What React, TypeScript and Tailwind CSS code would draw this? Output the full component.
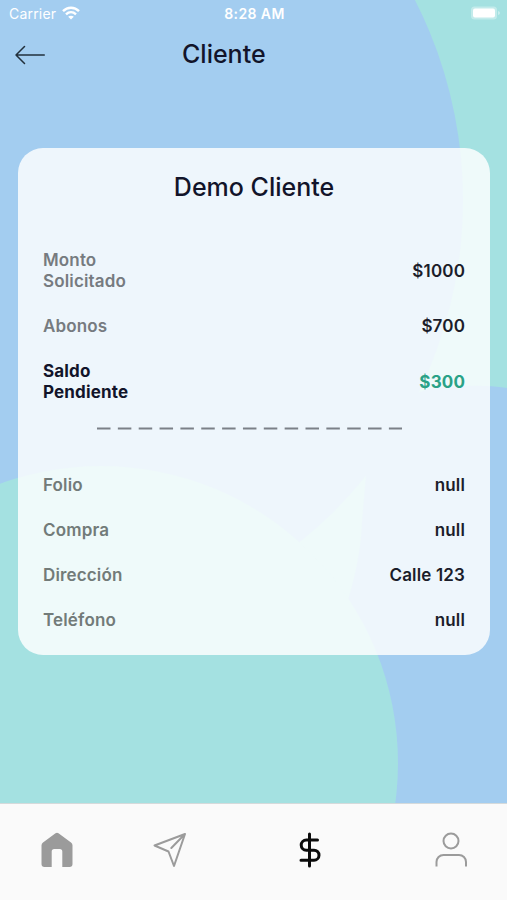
import React from 'react';

const amounts = [
  { label: 'Monto Solicitado', value: '$1000', labelClass: 'text-[#767b80]', valueClass: 'text-[#1b1d2a]' },
  { label: 'Abonos', value: '$700', labelClass: 'text-[#767b80]', valueClass: 'text-[#1b1d2a]' },
  { label: 'Saldo Pendiente', value: '$300', labelClass: 'text-[#12142a] font-bold', valueClass: 'text-[#2aa287] font-bold' },
];

const details = [
  { label: 'Folio', value: 'null' },
  { label: 'Compra', value: 'null' },
  { label: 'Dirección', value: 'Calle 123' },
  { label: 'Teléfono', value: 'null' },
];

const Background = () => (
  <svg className="absolute inset-0" width="507" height="804" viewBox="0 0 507 804">
    <rect width="507" height="804" fill="#a4e1e1" />
    <path d="M345 804V610Q361 560 362 522L366 476Q380 400 430 389Q475 383 507 388V804Z" fill="#a3cdf0" />
    <circle cx="23" cy="200" r="440" fill="#a3cdf0" />
    <circle cx="101" cy="763" r="297" fill="#a4e1e1" />
  </svg>
);

const StatusBar = () => (
  <div className="grid h-[26px] grid-cols-3 items-center pl-[9px] pr-[7px] text-[14px] text-white">
    <div className="flex items-center gap-[6px]">
      <span className="tracking-[0.2px]">Carrier</span>
      <svg width="18" height="14" viewBox="0 0 18 14" fill="none" stroke="white" strokeWidth="2.4">
        <path d="M1 5.2C5.5 .6 12.500 .6 17 5.200" />
        <path d="M4 8.300C7 5.500 11 5.500 14 8.300" />
        <path d="M9 13.500 6.200 10.700C7.700 9.300 10.300 9.300 11.800 10.700Z" fill="white" stroke="none" />
      </svg>
    </div>
    <span className="pt-px text-center text-[14px] font-semibold tracking-[0.4px]">8:28 AM</span>
    <svg className="justify-self-end" width="30" height="14" viewBox="0 0 30 14">
      <rect x="1" y=".5" width="26" height="13" rx="3.500" fill="white" fillOpacity=".35" />
      <rect x="3" y="2.500" width="22" height="9" rx="2" fill="white" />
      <path d="M28 5v4q2-.5 2-2t-2-2Z" fill="white" fillOpacity=".4" />
    </svg>
  </div>
);

const Header = () => (
  <div className="flex h-[57px] items-center px-[15px]">
    <svg width="30" height="20" viewBox="0 0 30 20" fill="none" stroke="#22303c" strokeWidth="1.500" strokeLinecap="round" strokeLinejoin="round">
      <path d="M29.300 10H1M9.500 1.500 1 10l8.500 8.500" />
    </svg>
    <h1 className="ml-[137px] text-[25px] font-[550] text-[#12142a]">Cliente</h1>
  </div>
);

const TabBar = () => (
  <nav className="relative flex h-[97px] shrink-0 border-t border-[#d5dadb] bg-[#fafafa]">
    <div className="w-[114px] pt-[28px]">
      <svg className="mx-auto" width="32" height="36" viewBox="0 0 32 36" fill="#9b9b9b">
        <path d="M14.500 1.200Q16 .2 17.500 1.200L30 10.500Q31.500 11.600 31.500 13.500V32Q31.500 35 28.500 35H21.300V19.500Q21.300 17 18.800 17H13.200Q10.700 17 10.700 19.500V35H3.500Q.5 35 .5 32V13.500Q.5 11.600 2 10.500Z" />
      </svg>
    </div>
    <div className="w-[111px] pt-[28px]">
      <svg className="mx-auto" width="34" height="36" viewBox="0 0 34 36" fill="none" stroke="#9b9b9b" strokeWidth="2" strokeLinejoin="round" strokeLinecap="round">
        <path d="M32 2 1.500 13.500 15.500 19.500 21 34 32 2 18.300 16" />
      </svg>
    </div>
    <div className="w-[169px] pt-[28px]">
      <svg className="mx-auto" width="22" height="36" viewBox="0 0 22 36" fill="none" stroke="#0b0b0b" strokeWidth="3" strokeLinecap="round">
        <path d="M10.500 2V34M18.500 8H7.300a5.100 5.100 0 0 0 0 10.200H15a5 5 0 0 1 0 10H2" />
      </svg>
    </div>
    <div className="flex-1 pt-[28px]">
      <svg className="mx-auto" width="32" height="36" viewBox="0 0 32 36" fill="none" stroke="#9b9b9b" strokeWidth="2">
        <circle cx="16" cy="9" r="7.500" />
        <path d="M1.500 34.500V30a7 7 0 0 1 7-7H24a7 7 0 0 1 7 7v4.500" />
      </svg>
    </div>
  </nav>
);

export default function App() {
  return (
    <div className="relative flex h-[900px] w-[507px] flex-col overflow-hidden font-['Inter',sans-serif]">
      <Background />
      <div className="relative flex-1">
        <StatusBar />
        <Header />

        {/* Client card */}
        <section className="ml-[18px] mr-[17px] mt-[65px] h-[507px] rounded-[25px] bg-white/82 px-[25px] pt-[21px] text-[17px] font-semibold leading-[21px] tracking-[0.15px]">
          <h2 className="text-center text-[25px] font-[550] leading-9 tracking-normal text-[#12142a]">Demo Cliente</h2>

          <div className="mt-[45px] flex flex-col gap-6">
            {amounts.map((row) => (
              <div key={row.label} className="flex items-center justify-between">
                <span className={`w-[100px] ${row.labelClass}`}>{row.label}</span>
                <span className={row.valueClass}>{row.value}</span>
              </div>
            ))}
          </div>

          {/* Divider */}
          <svg className="ml-[53px] mt-[24px]" width="307" height="3" viewBox="0 0 307 3">
            <path d="M1 1.500H306" stroke="#7b8087" strokeWidth="2" strokeDasharray="13.500 7.350" />
          </svg>

          <div className="mt-[45px] flex flex-col gap-6">
            {details.map((row) => (
              <div key={row.label} className="flex items-center justify-between">
                <span className="text-[#727b79]">{row.label}</span>
                <span className="text-[#1b1d2a]">{row.value}</span>
              </div>
            ))}
          </div>
        </section>
      </div>
      <TabBar />
    </div>
  );
}
